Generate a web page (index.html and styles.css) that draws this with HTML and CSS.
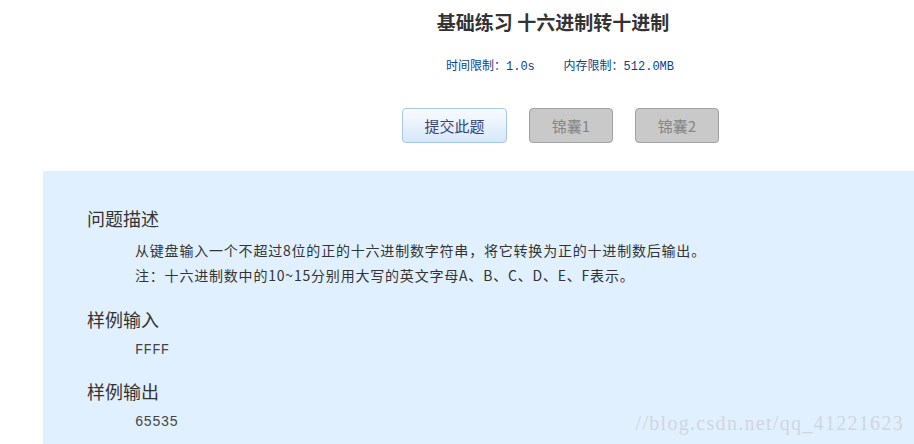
FILE: index.html
```html
<!DOCTYPE html>
<html lang="zh-CN">

<head>
    <meta charset="UTF-8" />
    <title>十六进制转十进制</title>
    <link rel="stylesheet" href="styles.css">
</head>

<body>
    <!-- 题目头部 -->
    <div class="head">
        <h1>基础练习 十六进制转十进制</h1>
        <p class="limit">时间限制：1.0s&nbsp;&nbsp;&nbsp;&nbsp;内存限制：512.0MB</p>
        <div class="btns">
            <button class="submit">提交此题</button>
            <button class="tip">锦囊1</button>
            <button class="tip">锦囊2</button>
        </div>
    </div>

    <!-- 题目内容 -->
    <div class="panel">
        <h3>问题描述</h3>
        <div class="text">
            <p>从键盘输入一个不超过8位的正的十六进制数字符串，将它转换为正的十进制数后输出。</p>
            <p>注：十六进制数中的10~15分别用大写的英文字母A、B、C、D、E、F表示。</p>
        </div>

        <h3>样例输入</h3>
        <div class="code">FFFF</div>

        <h3>样例输出</h3>
        <div class="code">65535</div>

        <span class="mark">//blog.csdn.net/qq_41221623</span>
    </div>
</body>

</html>
```

FILE: styles.css
```css
* {
    margin: 0;
    padding: 0;
    box-sizing: border-box;
}

body {
    font-family: "Noto Sans CJK SC", "Liberation Sans", sans-serif;
    background: #fff;
    color: #333;
    width: 914px;
    height: 444px;
    overflow: hidden;
}

/* 头部 */
.head {
    padding-left: 206px;
    text-align: center;
}

.head h1 {
    font-size: 19px;
    font-weight: bold;
    color: #333;
    padding-top: 7px;
    margin-right: 14px;
    line-height: 30px;
}

.limit {
    margin-top: 22px;
    font-family: "Liberation Mono", "Noto Sans CJK SC", monospace;
    font-size: 12px;
    line-height: 16px;
    color: #0d3f8f;
}

.btns {
    display: flex;
    justify-content: center;
    gap: 22px;
    margin-top: 33px;
    padding-left: 1px;
}

.btns button {
    height: 35px;
    border-radius: 4px;
    font-family: "Noto Sans CJK SC", sans-serif;
    font-size: 15px;
    cursor: pointer;
}

.submit {
    width: 105px;
    border: 1px solid #a7c8ee;
    background: linear-gradient(to bottom, #f8fbff, #d7e7fb);
    color: #3a4370;
}

.tip {
    width: 84px;
    border: 1px solid #a2a2a2;
    background-color: #c9c9c9;
    color: #858585;
}

/* 内容区 */
.panel {
    position: relative;
    margin-top: 28px;
    margin-left: 43px;
    height: 280px;
    background-color: #e1f0fe;
    padding: 34px 0 0 44px;
}

.panel h3 {
    font-size: 18px;
    font-weight: normal;
    color: #333;
    line-height: 26px;
}

.text {
    padding-left: 48px;
    margin-top: 7px;
    margin-bottom: 18px;
}

.text p {
    font-size: 14px;
    letter-spacing: 0.8px;
    line-height: 25px;
    color: #333;
}

.code {
    padding-left: 48px;
    font-family: "Liberation Mono", monospace;
    font-size: 14px;
    letter-spacing: 0.2px;
    line-height: 18px;
    margin-top: 9px;
    margin-bottom: 19px;
    color: #444;
}

.mark {
    position: absolute;
    right: 10px;
    bottom: 16px;
    font-family: "Liberation Serif", serif;
    font-size: 20px;
    letter-spacing: 1.3px;
    color: #d0d6dd;
}
```
